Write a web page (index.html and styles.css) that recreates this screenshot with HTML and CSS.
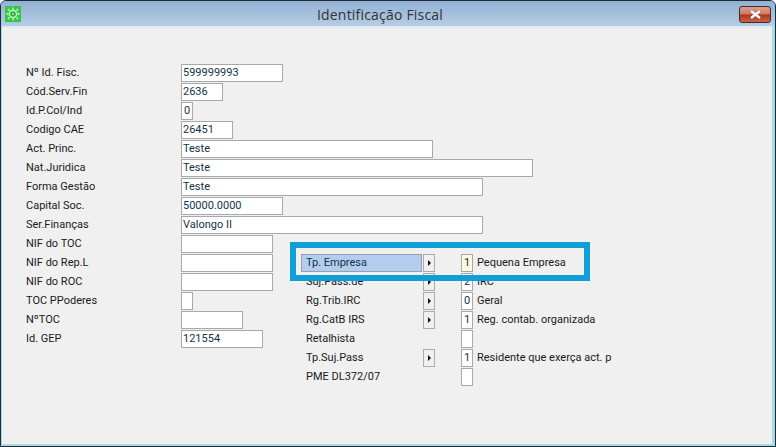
FILE: index.html
```html
<!DOCTYPE html>
<html>

<head>
    <meta charset="UTF-8">
    <meta name="viewport" content="width=device-width, initial-scale=1.0">
    <title>Identificação Fiscal</title>

    <link rel="stylesheet" href="styles.css">
</head>

<body>
    <div class="window">
        <div class="title-bar">
            <svg class="app-icon" width="16" height="16" viewBox="0 0 16 16">
                <rect width="16" height="16" fill="#34c648" />
                <circle cx="8" cy="8" r="3.6" fill="#2aa83a" stroke="#c4f5bc" stroke-width="1.6" />
                <circle cx="8" cy="8" r="1.2" fill="#7fe884" />
                <path d="M8 1.5v2M8 12.5v2M1.5 8h2M12.5 8h2M3 3l1.5 1.5M11.5 11.5l1.5 1.5M13 3l-1.5 1.5M4.5 11.5l-1.5 1.5" stroke="#a8f0a4" stroke-width="1.8" />
            </svg>
            <span class="title-text">Identificação Fiscal</span>
            <div class="close-btn">
                <svg width="15" height="9" viewBox="0 0 15 9">
                    <path d="M3 1l9 7M12 1l-9 7" stroke="#5a3a36" stroke-opacity="0.5" stroke-width="3.4" />
                    <path d="M3 1l9 7M12 1l-9 7" stroke="white" stroke-width="2.4" />
                </svg>
            </div>
        </div>

        <div class="content">
            <!-- top rows, the wide fields -->
            <div class="form-row"><label>Nº Id. Fisc.</label><span class="field w100">599999993</span></div>
            <div class="form-row"><label>Cód.Serv.Fin</label><span class="field w40">2636</span></div>
            <div class="form-row"><label>Id.P.Col/Ind</label><span class="field w10">0</span></div>
            <div class="form-row"><label>Codigo CAE</label><span class="field w50">26451</span></div>
            <div class="form-row"><label>Act. Princ.</label><span class="field w250">Teste</span></div>
            <div class="form-row"><label>Nat.Juridica</label><span class="field w350">Teste</span></div>
            <div class="form-row"><label>Forma Gestão</label><span class="field w300">Teste</span></div>
            <div class="form-row"><label>Capital Soc.</label><span class="field w100">50000.0000</span></div>
            <div class="form-row"><label>Ser.Finanças</label><span class="field w300">Valongo II</span></div>

            <div class="lower">
                <div class="lower-left">
                    <div class="form-row"><label>NIF do TOC</label><span class="field w90"></span></div>
                    <div class="form-row"><label>NIF do Rep.L</label><span class="field w90"></span></div>
                    <div class="form-row"><label>NIF do ROC</label><span class="field w90"></span></div>
                    <div class="form-row"><label>TOC PPoderes</label><span class="field w10"></span></div>
                    <div class="form-row"><label>NºTOC</label><span class="field w60"></span></div>
                    <div class="form-row"><label>Id. GEP</label><span class="field w80">121554</span></div>
                </div>

                <div class="lower-right">
                    <div class="form-row">
                        <label class="side-label selected">Tp. Empresa</label>
                        <span class="arrow-btn"></span>
                        <span class="field w10 current">1</span>
                        <span class="desc">Pequena Empresa</span>
                    </div>
                    <div class="form-row">
                        <label class="side-label">Suj.Pass.de</label>
                        <span class="arrow-btn"></span>
                        <span class="field w10">2</span>
                        <span class="desc">IRC</span>
                    </div>
                    <div class="form-row">
                        <label class="side-label">Rg.Trib.IRC</label>
                        <span class="arrow-btn"></span>
                        <span class="field w10">0</span>
                        <span class="desc">Geral</span>
                    </div>
                    <div class="form-row">
                        <label class="side-label">Rg.CatB IRS</label>
                        <span class="arrow-btn"></span>
                        <span class="field w10">1</span>
                        <span class="desc">Reg. contab. organizada</span>
                    </div>
                    <div class="form-row">
                        <label class="side-label">Retalhista</label>
                        <span class="no-btn"></span>
                        <span class="field w10"></span>
                    </div>
                    <div class="form-row">
                        <label class="side-label">Tp.Suj.Pass</label>
                        <span class="arrow-btn"></span>
                        <span class="field w10">1</span>
                        <span class="desc">Residente que exerça act. p</span>
                    </div>
                    <div class="form-row">
                        <label class="side-label">PME DL372/07</label>
                        <span class="no-btn"></span>
                        <span class="field w10"></span>
                    </div>
                </div>
            </div>

            <!-- annotation drawn over the screenshot -->
            <div class="callout"></div>
        </div>
    </div>
</body>

</html>
```

FILE: styles.css
```css
html,
body {
    margin: 0;
    padding: 0;
    height: 100%;
    overflow: hidden;
}

body {
    font-family: Roboto, sans-serif;
    font-size: 11px;
    color: #1a1a1a;
}

.window {
    box-sizing: border-box;
    height: 447px;
    display: flex;
    flex-direction: column;
    background: #a9dbe4;
    border: 1px solid #1d2a33;
    border-radius: 6px 6px 0 0;
    padding: 0 3px 2px 1px;
}

.title-bar {
    height: 25px;
    display: flex;
    align-items: flex-start;
    background: linear-gradient(#92b1d3, #b6cde5);
    margin: 0 -3px 0 -1px;
    padding: 0 4px 0 4px;
    border-radius: 5px 5px 0 0;
}

.app-icon {
    margin-top: 5px;
}

.title-text {
    flex: 1;
    text-align: center;
    line-height: 27px;
    font-family: "Open Sans", sans-serif;
    font-size: 14px;
    letter-spacing: 0.2px;
    color: #333;
}

.close-btn {
    box-sizing: border-box;
    width: 32px;
    height: 17px;
    margin-top: 5px;
    display: flex;
    align-items: center;
    justify-content: center;
    background: linear-gradient(#dc9f90 0%, #cf7a63 48%, #ae3417 52%, #c4654a 100%);
    border: 1px solid #4a2a25;
    border-radius: 3px;
}

.content {
    flex: 1;
    position: relative;
    background: #f0f0f0;
    border-top: 2px solid #e2ebf4;
    padding-top: 36px;
}

.form-row {
    height: 19px;
    display: flex;
    align-items: flex-start;
}

.form-row label {
    width: 155px;
    padding-left: 24px;
    line-height: 17px;
    white-space: nowrap;
}

.field {
    box-sizing: border-box;
    height: 18px;
    line-height: 15px;
    padding-left: 1px;
    background: white;
    border: 1px solid #a8a8a8;
    color: #12344d;
    white-space: nowrap;
    overflow: hidden;
}

.w10 {
    width: 12px;
    padding-left: 0;
    text-align: center;
}

.w40 { width: 42px; }
.w50 { width: 52px; }
.w60 { width: 62px; }
.w80 { width: 82px; }
.w90 { width: 92px; }
.w100 { width: 102px; }
.w250 { width: 252px; }
.w300 { width: 302px; }
.w350 { width: 352px; }

.lower {
    display: flex;
}

.lower-left {
    width: 299px;
}

.lower-right {
    margin-top: 19px;
}

.form-row .side-label {
    width: 116px;
    padding-left: 5px;
    margin-right: 1px;
}

.selected {
    height: 18px;
    background: #b4cdee;
    box-shadow: inset 0 0 0 1px #9a9fb0;
    color: #12344d;
}

.arrow-btn,
.no-btn {
    width: 12px;
    height: 18px;
    margin-right: 26px;
    flex-shrink: 0;
}

.arrow-btn {
    box-sizing: border-box;
    position: relative;
    background: #f0f0f0;
    border: 1px solid #acacac;
}

.arrow-btn::after {
    content: "";
    position: absolute;
    left: 4px;
    top: 5px;
    border-left: 3px solid #111;
    border-top: 3px solid transparent;
    border-bottom: 3px solid transparent;
}

.current {
    background: #fdf8df;
}

.desc {
    margin-left: 4px;
    line-height: 17px;
    white-space: nowrap;
}

.callout {
    position: absolute;
    left: 288px;
    top: 214px;
    width: 288px;
    height: 27px;
    border: 6px solid #0f9fd6;
}
```
